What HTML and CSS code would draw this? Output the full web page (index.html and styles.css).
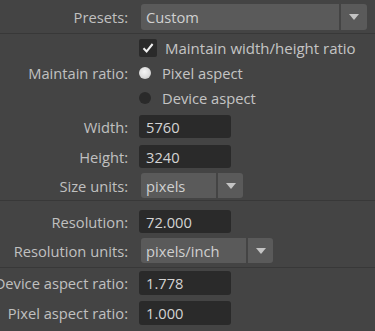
FILE: index.html
```html
<!DOCTYPE html>
<html lang="en">
<head>
    <meta charset="UTF-8">
    <title>Image Size</title>
    <link rel="stylesheet" href="styles.css">
</head>
<body>
    <div id="panel">
        <div class="row row-presets">
            <div class="label"><span>Presets:</span></div>
            <div class="dropdown dd-presets">
                <div class="dd-value">Custom</div>
                <div class="dd-arrow"><i></i></div>
            </div>
        </div>

        <div class="divider div-top"></div>

        <div class="row row-check">
            <div class="label"></div>
            <div class="check-line">
                <span class="checkbox">
                    <svg width="14" height="14" viewBox="0 0 14 14"><path d="M2.5 7.2 L5.6 10.4 L11.6 3" fill="none" stroke="#f0f0f0" stroke-width="2"/></svg>
                </span>
                <span class="check-text">Maintain width/height ratio</span>
            </div>
        </div>

        <div class="row row-radio">
            <div class="label"><span>Maintain ratio:</span></div>
            <div class="radio-line">
                <span class="radio on"></span>
                <span class="radio-text">Pixel aspect</span>
            </div>
        </div>
        <div class="row row-radio">
            <div class="label"></div>
            <div class="radio-line">
                <span class="radio"></span>
                <span class="radio-text">Device aspect</span>
            </div>
        </div>

        <div class="row row-width">
            <div class="label"><span>Width:</span></div>
            <div class="field">5760</div>
        </div>
        <div class="row row-height">
            <div class="label"><span>Height:</span></div>
            <div class="field">3240</div>
        </div>
        <div class="row row-units">
            <div class="label"><span>Size units:</span></div>
            <div class="dropdown dd-units">
                <div class="dd-value">pixels</div>
                <div class="dd-arrow"><i></i></div>
            </div>
        </div>

        <div class="divider div-mid"></div>

        <div class="row row-res">
            <div class="label"><span>Resolution:</span></div>
            <div class="field">72.000</div>
        </div>
        <div class="row row-resunits">
            <div class="label"><span>Resolution units:</span></div>
            <div class="dropdown dd-resunits">
                <div class="dd-value">pixels/inch</div>
                <div class="dd-arrow"><i></i></div>
            </div>
        </div>

        <div class="divider div-low"></div>

        <div class="row row-device">
            <div class="label"><span>Device aspect ratio:</span></div>
            <div class="field">1.778</div>
        </div>
        <div class="row row-pixel">
            <div class="label"><span>Pixel aspect ratio:</span></div>
            <div class="field">1.000</div>
        </div>
    </div>
</body>
</html>
```

FILE: styles.css
```css
body {
    margin: 0;
    padding: 0;
    background-color: #444444;
    color: #c0c0c0;
    font-family: 'Open Sans', 'Liberation Sans', sans-serif;
    font-size: 14.7px;
    overflow: hidden;
}

#panel {
    width: 375px;
    height: 331px;
    padding-top: 4px;
    box-sizing: border-box;
}

.row {
    display: grid;
    grid-template-columns: 128px auto;
    column-gap: 11px;
    align-items: center;
}

.label {
    display: flex;
    justify-content: flex-end;
    white-space: nowrap;
    color: #c0c0c0;
}

/* rows */
.row-presets { height: 26px; }
.row-check { height: 25px; margin-top: 1px; }
.row-radio { height: 25px; }
.row-width { height: 23px; margin-top: 5px; }
.row-height { height: 23px; margin-top: 7px; }
.row-units { height: 25px; margin-top: 5px; }
.row-res { height: 23px; margin-top: 9px; }
.row-resunits { height: 25px; margin-top: 5px; }
.row-device { height: 24px; margin-top: 3px; }
.row-pixel { height: 24px; margin-top: 6px; }

.divider {
    height: 1px;
    background-color: #383838;
}

.div-top { margin-top: 3px; }
.div-mid { margin-top: 2px; }
.div-low { margin-top: 4px; }

/* dropdowns */
.dropdown {
    display: flex;
    height: 100%;
    margin-left: 2px;
    gap: 2px;
}

.dd-value {
    background-color: #5a5a5a;
    border-radius: 3px 0 0 3px;
    color: #d0d0d0;
    padding-left: 5px;
    display: flex;
    align-items: center;
    box-sizing: border-box;
}

.dd-arrow {
    background-color: #5a5a5a;
    border-radius: 0 3px 3px 0;
    display: flex;
    align-items: center;
    justify-content: center;
}

.dd-arrow i {
    width: 0;
    height: 0;
    border-left: 5px solid transparent;
    border-right: 5px solid transparent;
    border-top: 6px solid #c4c4c4;
}

.dd-presets .dd-value { width: 198px; }
.dd-presets .dd-arrow { width: 26px; }
.dd-units .dd-value { width: 75px; }
.dd-units .dd-arrow { width: 25px; }
.dd-resunits .dd-value { width: 105px; }
.dd-resunits .dd-arrow { width: 25px; }

/* fields */
.field {
    width: 92px;
    height: 100%;
    background-color: #2a2a2a;
    border-radius: 3px;
    color: #d4d4d4;
    padding-left: 7px;
    box-sizing: border-box;
    display: flex;
    align-items: center;
}

/* checkbox */
.check-line, .radio-line {
    display: flex;
    align-items: center;
}

.checkbox {
    width: 18px;
    height: 18px;
    background-color: #2a2a2a;
    border-radius: 2px;
    display: flex;
    align-items: center;
    justify-content: center;
}

.check-text {
    margin-left: 8px;
    font-size: 15px;
    color: #c4c4c4;
}

/* radios */
.radio {
    width: 12px;
    height: 12px;
    border-radius: 50%;
    background-color: #2a2a2a;
}

.radio.on {
    background: radial-gradient(circle at 45% 40%, #f4f4f4 0%, #dcdcdc 55%, #b8b8b8 100%);
}

.radio-text {
    margin-left: 11px;
    color: #c4c4c4;
}
```
